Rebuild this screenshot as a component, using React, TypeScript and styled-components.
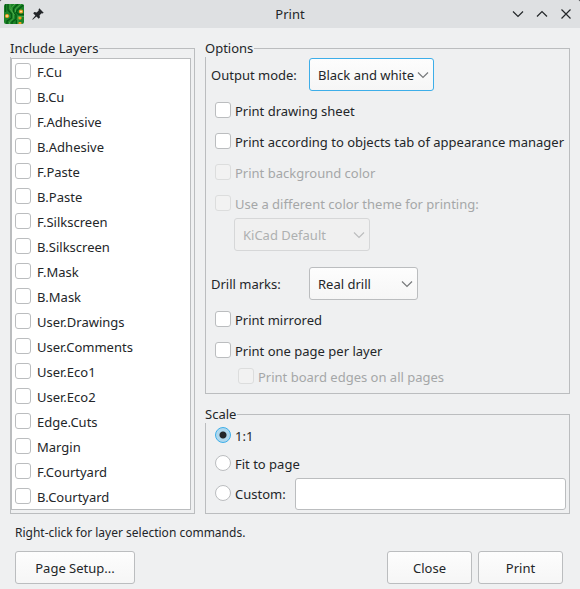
import React, { useState } from "react";
import styled, { createGlobalStyle, css } from "styled-components";

const color = {
  window: "#eff0f1",
  title: "#dee0e2",
  text: "#232629",
  muted: "#a5a7a8",
  line: "#bbbdbf",
  faint: "#d6d7d8",
  accent: "#3daee9",
};

const GlobalStyle = createGlobalStyle`
  * { box-sizing: border-box; }
  body {
    margin: 0;
    background: #4b4d50;
    color: ${color.text};
    font: 13px/18px "Noto Sans", sans-serif;
  }
  button, input, select { font: inherit; color: inherit; margin: 0; }
`;

const Window = styled.div`
  min-height: 100vh;
  display: flex;
  flex-direction: column;
  background: ${color.window};
  border-radius: 3px 3px 0 0;
`;

const TitleBar = styled.header`
  display: grid;
  grid-template-columns: 1fr auto 1fr;
  align-items: center;
  height: 28px;
  padding: 0 4px;
  background: ${color.title};
  border-radius: 3px 3px 0 0;
`;

const Title = styled.h1`
  margin: 0;
  font-size: 13px;
  font-weight: 400;
`;

const TitleGroup = styled.div<{ $end?: boolean }>`
  display: flex;
  align-items: center;
  gap: ${(p) => (p.$end ? 0 : 2)}px;
  justify-content: ${(p) => (p.$end ? "flex-end" : "flex-start")};
  margin-right: ${(p) => (p.$end ? -2 : 0)}px;
`;

const TitleButton = styled.button`
  display: grid;
  place-items: center;
  width: 24px;
  height: 24px;
  padding: 0;
  border: 0;
  background: none;
`;

const Content = styled.main`
  display: grid;
  grid-template-columns: 185px minmax(0, 1fr);
  gap: 10px;
  padding: 11px 10px 0;
`;

const Column = styled.div`
  display: flex;
  flex-direction: column;
  gap: 11px;
`;

const Group = styled.fieldset<{ $list?: boolean }>`
  min-width: 0;
  margin: 0;
  border: 1px solid ${color.line};
  padding: ${(p) => (p.$list ? "1px 3px 3px 0" : "0 3px 3px 5px")};
`;

const GroupTitle = styled.legend<{ $list?: boolean }>`
  height: 18px;
  padding: 0 1px 0 0;
  margin-left: ${(p) => (p.$list ? -1 : -6)}px;
`;

const LayerList = styled.ul`
  list-style: none;
  margin: 0;
  padding: 0;
  background: #fff;
  border: 1px solid ${color.line};
`;

const LayerItem = styled.li`
  height: 25px;
  padding: 0 3px;
`;

const Field = styled.label<{ $gap?: number; $indent?: boolean; $off?: boolean }>`
  display: flex;
  align-items: center;
  gap: ${(p) => p.$gap ?? 4}px;
  height: 24px;
  margin-left: ${(p) => (p.$indent ? 23 : 0)}px;
  color: ${(p) => (p.$off ? color.muted : "inherit")};
  white-space: nowrap;
`;

const FieldText = styled.span`
  padding-top: 2px;
`;

const toggle = css`
  appearance: none;
  flex: none;
  width: 16px;
  height: 16px;
  border: 1px solid ${color.line};
  background: #fff;
`;

const Check = styled.input.attrs({ type: "checkbox" })`
  ${toggle}
  border-radius: 3px;
  &:checked {
    border-color: ${color.accent};
    background: #a9d6ee;
  }
  &:disabled {
    border-color: #dcdddd;
    background: #f2f2f2;
  }
`;

const Radio = styled.input.attrs({ type: "radio" })`
  ${toggle}
  border-radius: 50%;
  &:checked {
    border-color: ${color.accent};
    background: radial-gradient(circle, ${color.text} 0 3px, #afd8ee 4px);
  }
`;

const OptionRows = styled.div`
  display: flex;
  flex-direction: column;
  gap: 7px;
  padding: 7px 4px 0;
`;

const SelectRow = styled.div<{ $first?: boolean }>`
  display: grid;
  grid-template-columns: 98px auto 1fr;
  align-items: center;
  margin-top: ${(p) => (p.$first ? 1 : 16)}px;
`;

const ThemeRow = styled.div`
  display: flex;
  padding: 3px 0 0 23px;
`;

const EdgeRow = styled.div`
  padding: 2px 4px 2px;
`;

const SelectBox = styled.div<{ $width: number }>`
  position: relative;
  width: ${(p) => p.$width}px;
  height: 33px;
  svg {
    position: absolute;
    right: 5px;
    top: 13px;
    pointer-events: none;
  }
`;

const buttonFace = css`
  height: 33px;
  border: 1px solid ${color.line};
  border-radius: 3px;
  background: linear-gradient(#fdfdfd, #f6f6f6);
`;

const Select = styled.select<{ $active?: boolean }>`
  ${buttonFace}
  appearance: none;
  display: block;
  width: 100%;
  padding: 1px 16px 0 8px;
  border-color: ${(p) => (p.$active ? color.accent : color.line)};
  outline: none;
  &:disabled {
    color: #aeb0b1;
    opacity: 1;
    border-color: ${color.faint};
    background: #f0f0f0;
  }
`;

const ScaleRows = styled.div`
  display: flex;
  flex-direction: column;
  gap: 4px;
  padding-left: 4px;
`;

const CustomRow = styled.div`
  display: flex;
  align-items: flex-start;
  gap: 9px;
  margin-top: -1px;
`;

const CustomField = styled(Field)`
  height: 30px;
`;

const CustomInput = styled.input`
  flex: 1;
  min-width: 0;
  height: 32px;
  padding: 0 6px;
  border: 1px solid ${color.line};
  border-radius: 3px;
  background: #fff;
`;

const Hint = styled.p`
  margin: 10px 15px 9px;
  font-size: 12px;
`;

const Footer = styled.footer`
  display: flex;
  gap: 6px;
  padding: 0 17px 5px 15px;
`;

const Button = styled.button<{ $wide?: boolean }>`
  ${buttonFace}
  width: ${(p) => (p.$wide ? 120 : 85)}px;
  margin-right: ${(p) => (p.$wide ? "auto" : 0)};
  padding: 1px 0 0;
`;

const layers = [
  "F.Cu", "B.Cu", "F.Adhesive", "B.Adhesive", "F.Paste", "B.Paste",
  "F.Silkscreen", "B.Silkscreen", "F.Mask", "B.Mask", "User.Drawings",
  "User.Comments", "User.Eco1", "User.Eco2", "Edge.Cuts", "Margin",
  "F.Courtyard", "B.Courtyard",
];

const BoardIcon = () => (
  <svg width="20" height="20" viewBox="0 0 20 20" aria-hidden="true">
    <defs>
      <clipPath id="board"><rect width="20" height="20" rx="2" /></clipPath>
    </defs>
    <g clipPath="url(#board)">
      <rect width="20" height="20" fill="#1c8428" />
      <g fill="none" stroke="#055a14" strokeWidth="1.300">
        <path d="M1.500 0v8M4 0v6l3.500 4v4L3 17v3M14 0 9.500 4.500v4L12 11v4l-4 3v2M19.500 1 14 5.500 12 8l3 2.500h5M12.500 20v-4" />
      </g>
      <g fill="none" stroke="#4cab48" strokeWidth=".9">
        <path d="M6 0v5l3.300 4v5.500L5.500 18v2M11 0 7.800 3.500v4L10.500 11M17 0l-5.500 5v3M3.500 12H6M14 20v-7.500h6" />
      </g>
      <g fill="#ffe9b4" stroke="#ee961c" strokeWidth="1.200">
        <circle cx="3" cy="12" r="1.500" />
        <circle cx="17" cy="7.500" r="1.500" />
      </g>
      <g fill="#f09a20">
        <rect x="14.500" y="12.800" width="3" height="2.600" rx=".8" />
        <rect x="14.500" y="18" width="3" height="2.600" rx=".8" />
      </g>
    </g>
  </svg>
);

const PinIcon = () => (
  <svg width="12" height="12" viewBox="0 0 12 12" aria-hidden="true">
    <path d="M7.300.3 11.700 4.700l-1.200.7-.9-.1-2 2 .3 2.300-1.200 1.200L4.500 8.600 1 11.500.3 11.700l.2-.7L3.400 7.500 1.200 5.300l1.200-1.200 2.300.3 2-2-.1-.9z" fill={color.text} />
  </svg>
);

const Chevron = ({ up, stroke = color.text }: { up?: boolean; stroke?: string }) => (
  <svg width="12" height="8" viewBox="0 0 12 8" aria-hidden="true">
    <path d={up ? "M1 6.500 6 1.500l5 5" : "M1 1.500l5 5 5-5"} fill="none" stroke={stroke} strokeWidth="1.200" />
  </svg>
);

const CloseIcon = () => (
  <svg width="10" height="10" viewBox="0 0 10 10" aria-hidden="true">
    <path d="M.5.5l9 9M9.500.5l-9 9" stroke={color.text} strokeWidth="1.200" />
  </svg>
);

interface CheckFieldProps {
  label: string;
  gap?: number;
  disabled?: boolean;
  indent?: boolean;
}

const CheckField = ({ label, gap, disabled, indent }: CheckFieldProps) => (
  <Field $gap={gap} $indent={indent} $off={disabled}>
    <Check disabled={disabled} />
    <FieldText>{label}</FieldText>
  </Field>
);

interface DropDownProps {
  id?: string;
  label?: string;
  width: number;
  options: string[];
  active?: boolean;
  disabled?: boolean;
}

const DropDown = ({ id, label, width, options, active, disabled }: DropDownProps) => (
  <SelectBox $width={width}>
    <Select id={id} aria-label={label} $active={active} disabled={disabled}>
      {options.map((option) => <option key={option}>{option}</option>)}
    </Select>
    <Chevron stroke={disabled ? "#bcbdbe" : "#77797b"} />
  </SelectBox>
);

export default function App() {
  const [scale, setScale] = useState("actual");
  const radio = (value: string) => ({
    name: "scale",
    value,
    checked: scale === value,
    onChange: () => setScale(value),
  });

  return (
    <>
      <GlobalStyle />
      <Window>
        <TitleBar>
          <TitleGroup>
            <BoardIcon />
            <TitleButton aria-label="Keep above"><PinIcon /></TitleButton>
          </TitleGroup>
          <Title>Print</Title>
          <TitleGroup $end>
            <TitleButton aria-label="Minimize"><Chevron /></TitleButton>
            <TitleButton aria-label="Maximize"><Chevron up /></TitleButton>
            <TitleButton aria-label="Close window"><CloseIcon /></TitleButton>
          </TitleGroup>
        </TitleBar>

        <Content>
          <Group $list>
            <GroupTitle $list>Include Layers</GroupTitle>
            <LayerList>
              {layers.map((name) => (
                <LayerItem key={name}><CheckField label={name} gap={6} /></LayerItem>
              ))}
            </LayerList>
          </Group>

          <Column>
            <Group>
              <GroupTitle>Options</GroupTitle>
              <SelectRow $first>
                <label htmlFor="mode">Output mode:</label>
                <DropDown id="mode" width={125} options={["Black and white", "Color"]} active />
              </SelectRow>
              <OptionRows>
                <CheckField label="Print drawing sheet" />
                <CheckField label="Print according to objects tab of appearance manager" />
                <CheckField label="Print background color" disabled />
                <CheckField label="Use a different color theme for printing:" disabled />
              </OptionRows>
              <ThemeRow>
                <DropDown label="Color theme" width={136} options={["KiCad Default"]} disabled />
              </ThemeRow>
              <SelectRow>
                <label htmlFor="drill">Drill marks:</label>
                <DropDown id="drill" width={109} options={["Real drill", "No drill mark", "Small mark"]} />
              </SelectRow>
              <OptionRows>
                <CheckField label="Print mirrored" />
                <CheckField label="Print one page per layer" />
              </OptionRows>
              <EdgeRow>
                <CheckField label="Print board edges on all pages" indent disabled />
              </EdgeRow>
            </Group>

            <Group>
              <GroupTitle>Scale</GroupTitle>
              <ScaleRows>
                <Field><Radio {...radio("actual")} /><FieldText>1:1</FieldText></Field>
                <Field><Radio {...radio("fit")} /><FieldText>Fit to page</FieldText></Field>
                <CustomRow>
                  <CustomField><Radio {...radio("custom")} /><FieldText>Custom:</FieldText></CustomField>
                  <CustomInput type="text" aria-label="Custom scale" />
                </CustomRow>
              </ScaleRows>
            </Group>
          </Column>
        </Content>

        <Hint>Right-click for layer selection commands.</Hint>
        <Footer>
          <Button $wide>Page Setup...</Button>
          <Button>Close</Button>
          <Button>Print</Button>
        </Footer>
      </Window>
    </>
  );
}
